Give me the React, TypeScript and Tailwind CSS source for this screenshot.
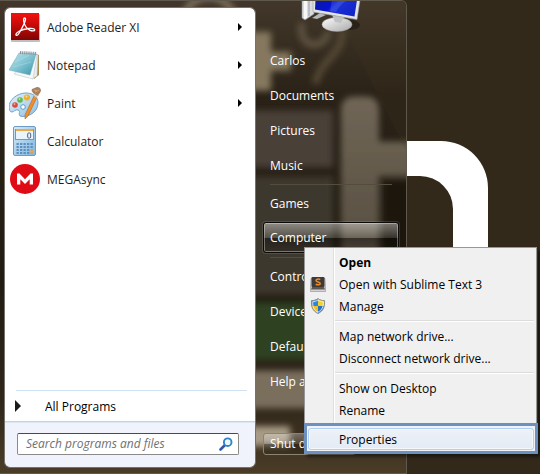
import React from "react";

const font = "font-['Open_Sans','Noto_Sans',sans-serif]";

function AdobeIcon() {
  return (
    <svg viewBox="0 0 32 32" className="size-8 shrink-0" aria-hidden="true">
      <defs>
        <linearGradient id="adobe" x1="0" y1="0" x2="0" y2="1">
          <stop offset="0" stopColor="#f3120f" />
          <stop offset="0.5" stopColor="#c00a08" />
          <stop offset="1" stopColor="#7d0503" />
        </linearGradient>
      </defs>
      <rect x="2" y="3" width="29" height="28" rx="1" fill="#000" opacity="0.25" />
      <rect x="2" y="2" width="28" height="27" fill="url(#adobe)" />
      <path
        d="M15.600 7c-1.300 0-1.200 2.200-.5 4.800.9 3.100 3 5.900 5.600 7.300 2.200 1.100 5 1.200 5.100-.2.100-1.500-3-1.600-5.900-1.400-3.600.3-7.400 1.300-9.800 2.700-2.500 1.400-3.700 3.100-3 4 .9 1 2.800-1.200 4.400-4.400 2-3.700 4.900-9.700 5-11.200.1-1.100-.3-1.600-.9-1.600z"
        fill="none"
        stroke="#fff"
        strokeWidth="1.300"
      />
    </svg>
  );
}

function NotepadIcon() {
  return (
    <svg viewBox="0 0 32 32" className="size-8 shrink-0" aria-hidden="true">
      <defs>
        <linearGradient id="pad" x1="0" y1="0" x2="1" y2="1">
          <stop offset="0" stopColor="#c4e6ec" />
          <stop offset="0.5" stopColor="#7fc3d2" />
          <stop offset="1" stopColor="#3a93a8" />
        </linearGradient>
      </defs>
      <path d="M27 5l3 1v20l-5 4z" fill="#a58c52" />
      <path d="M26 5l3 1-1 21-5 3z" fill="#e9edf0" stroke="#b7c2c7" strokeWidth="0.500" />
      <path d="M26 5l2 1-4 24-19-5z" fill="#f6f9fa" stroke="#aebdc2" strokeWidth="0.500" />
      <path d="M10 4l17 1-6 21-21-5z" fill="url(#pad)" stroke="#6aa8b4" strokeWidth="0.500" />
      <path d="M6 13l14-7M4 18l18-5" stroke="#c8eaf0" strokeWidth="0.500" opacity="0.700" />
      <path d="M11 3.500l17 1" stroke="#8b9498" strokeWidth="3" strokeDasharray="1.200 0.900" />
    </svg>
  );
}

function PaintIcon() {
  return (
    <svg viewBox="0 0 32 32" className="size-8 shrink-0" aria-hidden="true">
      <defs>
        <linearGradient id="palette" x1="0" y1="0" x2="1" y2="1">
          <stop offset="0" stopColor="#e4f2fb" />
          <stop offset="1" stopColor="#8dbfe2" />
        </linearGradient>
      </defs>
      <path
        d="M17 6C8 6 0 13 0 20c0 3 1 5 3 5s3-3 6-2 0 4 2 6c5 2 18-2 18-13C29 10 24 6 17 6z"
        fill="url(#palette)"
        stroke="#6f9fc8"
        strokeWidth="1"
      />
      <circle cx="6" cy="18" r="2.800" fill="#d94a3f" />
      <circle cx="11" cy="13" r="2.800" fill="#61b84b" />
      <circle cx="18" cy="10.500" r="3" fill="#f1ae27" />
      <circle cx="5.500" cy="17" r="1" fill="#f2a69d" />
      <circle cx="10.500" cy="12" r="1" fill="#b5e39a" />
      <circle cx="17.500" cy="9.500" r="1" fill="#ffe28c" />
      <circle cx="14" cy="20" r="2.300" fill="#fff" stroke="#5b9bcb" strokeWidth="1" />
      <path d="M25 9l3 1-9 19-3 3 0-4z" fill="#ef9030" stroke="#b8611a" strokeWidth="0.600" />
      <path d="M25 9l1-2 3 1-1 3z" fill="#cfd5d8" />
      <path d="M25 7c-2-2-3-4-2-5 2-1 3-1 5-2 3 0 4 2 4 4-1 2-2 3-3 5z" fill="#a9825e" />
      <path d="M25 3l3 1M26 5l4-2" stroke="#d0b08a" strokeWidth="0.800" />
    </svg>
  );
}

function CalculatorIcon() {
  const cols = [7.500, 11, 14.500, 18, 21.500];
  const rows = [18, 21, 24, 27];
  return (
    <svg viewBox="0 0 32 32" className="size-8 shrink-0" aria-hidden="true">
      <defs>
        <linearGradient id="calc" x1="0" y1="0" x2="1" y2="1">
          <stop offset="0" stopColor="#d5ebf9" />
          <stop offset="1" stopColor="#7fb6df" />
        </linearGradient>
      </defs>
      <rect x="4.500" y="1.500" width="22" height="29" rx="1.500" fill="url(#calc)" stroke="#6c9cc5" />
      <rect x="6.500" y="4.500" width="18" height="10" fill="#eaf4fb" stroke="#6e9abf" />
      <rect x="7" y="4" width="17" height="2" fill="#f0a844" />
      <rect x="18.700" y="8" width="3" height="5" rx="1" fill="none" stroke="#4d6280" strokeWidth="1" />
      {rows.map((y) =>
        cols.map((x) => (
          <rect
            key={`${x}-${y}`}
            x={x}
            y={y}
            width="2.300"
            height="2"
            fill={x > 20 && y > 23 ? "#f09a2c" : "#5f8fbd"}
          />
        )),
      )}
    </svg>
  );
}

function MegaIcon() {
  return (
    <svg viewBox="0 0 32 32" className="size-8 shrink-0" aria-hidden="true">
      <circle cx="16" cy="16" r="15" fill="#df0b15" />
      <path d="M8 21.500v-11h2.500l5.500 5.700 5.500-5.700H24v11h-3.300v-5.200L16 21l-4.700-4.700v5.200z" fill="#fff" />
    </svg>
  );
}

function SublimeIcon() {
  return (
    <svg viewBox="0 0 16 16" className="size-4" aria-hidden="true">
      <path d="M1 2.500h14l.7 13H.3z" fill="#d4d4d4" stroke="#8d8d8d" strokeWidth="0.600" />
      <rect x="1.500" y="1" width="13" height="10" rx="1" fill="#3d3a38" />
      <path d="M2 11h12l1 2.500H1z" fill="#5b5856" />
      <path
        d="M10.300 3.500C8 2.700 6 3.100 6 4.500c0 1.800 4.200 1.100 4.200 2.900 0 1.500-2.600 1.800-4.500.9"
        fill="none"
        stroke="#ef8b27"
        strokeWidth="1.500"
      />
    </svg>
  );
}

function ShieldIcon() {
  const shape = "M8 .6c2 1.500 4 2 6.500 2 .5 6-1 10.300-6.500 12.900C2.500 12.900 1 8.600 1.500 2.600 4 2.600 6 2.100 8 .6z";
  return (
    <svg viewBox="0 0 16 16" className="size-4" aria-hidden="true">
      <defs>
        <clipPath id="shield">
          <path d={shape} />
        </clipPath>
      </defs>
      <g clipPath="url(#shield)">
        <rect width="8" height="8" fill="#2f86d8" />
        <rect x="8" width="8" height="8" fill="#f8d02c" />
        <rect y="8" width="8" height="8" fill="#f5bf1f" />
        <rect x="8" y="8" width="8" height="8" fill="#2370c4" />
      </g>
      <path d={shape} fill="none" stroke="#7f8c96" strokeWidth="1" />
      <path d="M8 2c1.600 1.100 3.400 1.600 5.300 1.700.2 5-1.100 8.300-5.300 10.500C3.800 12 2.500 8.700 2.700 3.700 4.600 3.600 6.400 3.100 8 2z" fill="none" stroke="#e8eef2" strokeWidth="0.900" />
    </svg>
  );
}

function ComputerPicture() {
  return (
    <svg viewBox="0 0 64 36" className="h-9 w-16" aria-hidden="true">
      <defs>
        <linearGradient id="screen" x1="0" y1="0" x2="1" y2="0.400">
          <stop offset="0" stopColor="#0a1a9c" />
          <stop offset="0.450" stopColor="#0713d2" />
          <stop offset="0.550" stopColor="#1a30d8" />
          <stop offset="1" stopColor="#1327c8" />
        </linearGradient>
        <linearGradient id="base" x1="0" y1="0" x2="1" y2="1">
          <stop offset="0" stopColor="#fdfdfd" />
          <stop offset="0.500" stopColor="#d2d2d2" />
          <stop offset="1" stopColor="#a9a9a9" />
        </linearGradient>
      </defs>
      <ellipse cx="50" cy="25" rx="10" ry="5" fill="#0d0b08" opacity="0.400" />
      <path d="M2 0h12v14L5 20l-3-2z" fill="#d9dcdf" stroke="#8c9093" strokeWidth="0.600" />
      <path d="M4 0h3v18l-3 1z" fill="#f8f8f8" />
      <path d="M9 0v16" stroke="#9a9fa3" />
      <path d="M12 18l8-5 6 2-9 4z" fill="#b5b8ba" />
      <ellipse cx="37" cy="24.500" rx="15" ry="7" fill="url(#base)" stroke="#999" strokeWidth="0.500" />
      <path d="M32 15l12 2-3 6-6-1z" fill="#bfc1c3" />
      <path d="M13 0h47l-3 19.500L13 12z" fill="#e2e4e5" stroke="#9ea1a4" strokeWidth="0.600" />
      <path d="M15.500 0H57l-2.500 16.500L15 9.500z" fill="url(#screen)" />
      <path d="M32 0h16c-6 3-9 7-12 12l-6-1z" fill="#7795f5" opacity="0.250" />
    </svg>
  );
}

/* Blurred wallpaper as it shows through the glass of the menu. */
function GlassBackdrop() {
  return (
    <svg
      viewBox="0 0 406 474"
      preserveAspectRatio="none"
      className="absolute inset-0 size-full"
      aria-hidden="true"
    >
      <defs>
        <filter id="soft" x="-20%" y="-20%" width="140%" height="140%">
          <feGaussianBlur stdDeviation="3" />
        </filter>
        <linearGradient id="glass" x1="0" y1="0" x2="0" y2="1">
          <stop offset="0" stopColor="#42372a" />
          <stop offset="0.200" stopColor="#2a2217" />
          <stop offset="0.600" stopColor="#211c12" />
          <stop offset="0.850" stopColor="#30271a" />
          <stop offset="1" stopColor="#4a3c27" />
        </linearGradient>
        <linearGradient id="stem" x1="0" y1="0" x2="0" y2="1">
          <stop offset="0" stopColor="#706656" />
          <stop offset="1" stopColor="#50483b" />
        </linearGradient>
      </defs>
      <rect width="406" height="474" fill="url(#glass)" />
      <g filter="url(#soft)">
        <circle cx="209" cy="22" r="26" fill="none" stroke="#85775f" strokeWidth="6" />
        <path d="M240 31h31v20h20v19h-20v20h-31z" fill="#85785f" />
        <path d="M302 22c-3 16 6 24 16 21 7-2 10-8 10-13" fill="none" stroke="#5f533f" strokeWidth="7" />
        <path d="M342 28c2 26-20 28-27 55" fill="none" stroke="#554936" strokeWidth="7" />
        <rect x="240" y="110" width="93" height="57" fill="#484137" />
        <rect x="240" y="176" width="93" height="119" fill="#3e382e" />
        <rect x="240" y="303" width="180" height="57" fill="#2f4321" />
        <rect x="240" y="371" width="180" height="38" fill="#7a6e5d" />
        <rect x="240" y="427" width="50" height="20" fill="#a79b86" />
        <path d="M341 110q0-14 14-14h10q14 0 14 14v31h40v35h-40v120h-38z" fill="url(#stem)" />
        <path d="M383 180h40v120h-40z" fill="#1b160e" />
      </g>
      <path d="M330 0h76v150z" fill="#4b3b22" opacity="0.150" />
    </svg>
  );
}

function Wallpaper() {
  return (
    <svg className="absolute left-0 top-0 h-[474px] w-[540px]" viewBox="0 0 540 474" aria-hidden="true">
      <path d="M380 141h61a47 47 0 0 1 47 47v240h-35V209a33 33 0 0 0-33-33h-40z" fill="#fff" />
    </svg>
  );
}

const programs = [
  { name: "Adobe Reader XI", icon: <AdobeIcon />, more: true },
  { name: "Notepad", icon: <NotepadIcon />, more: true },
  { name: "Paint", icon: <PaintIcon />, more: true },
  { name: "Calculator", icon: <CalculatorIcon />, more: false },
  { name: "MEGAsync", icon: <MegaIcon />, more: false },
];

const placeGroups = [
  ["Carlos", "Documents", "Pictures", "Music"],
  ["Games", "Computer"],
  ["Control Panel", "Devices and Printers", "Default Programs", "Help and Support"],
];

function ProgramsPanel() {
  return (
    <div className="flex w-[250px] shrink-0 flex-col overflow-hidden rounded-[5px] bg-white outline outline-1 outline-[#76716a]">
      <ul>
        {programs.map((p) => (
          <li key={p.name}>
            <button type="button" className="flex h-[38px] w-full items-center pl-1 pr-[13px] text-left text-[#1e1e1e]">
              {p.icon}
              <span className="ml-[6px] flex-1 pt-[2px]">{p.name}</span>
              {p.more && (
                <svg viewBox="0 0 4 8" className="h-2 w-1" aria-hidden="true">
                  <path d="M0 0l4 4-4 4z" fill="#000" />
                </svg>
              )}
            </button>
          </li>
        ))}
      </ul>
      <div className="flex-1" />
      <div className="ml-[11px] mr-2 h-px bg-[#d0e3f5]" />
      <button type="button" className="flex h-[30px] items-center pl-[10px] text-left text-black">
        <svg viewBox="0 0 6 12" className="h-3 w-[6px]" aria-hidden="true">
          <path d="M0 0l6 6-6 6z" fill="#1a1a1a" />
        </svg>
        <span className="ml-6 pt-[2px]">All Programs</span>
      </button>
      <div className="border-t border-[#c3d3e5] bg-[#f0f3fb] pb-3 pl-3 pr-4 pt-[11px] shadow-[inset_0_1px_0_#dde7f3]">
        <label className="flex h-[22px] items-center rounded-[2px] border border-[#8a8a8a] border-t-[#4a4a4a] bg-white pl-2 pr-[5px]">
          <input
            type="text"
            aria-label="Search programs and files"
            placeholder="Search programs and files"
            className="min-w-0 flex-1 italic outline-none placeholder:text-[#707070]"
          />
          <svg viewBox="0 0 14 14" className="size-[14px]" aria-hidden="true">
            <path d="M1.500 12.500L6 8" stroke="#3358a8" strokeWidth="2.600" strokeLinecap="round" />
            <circle cx="8.700" cy="5.200" r="3.800" fill="#eef7fd" stroke="#2f83cc" strokeWidth="1.900" />
          </svg>
        </label>
      </div>
    </div>
  );
}

function Place({ name }: { name: string }) {
  const active = name === "Computer";
  return (
    <button
      type="button"
      className={
        active
          ? "mb-[3px] mt-px flex h-[31px] w-full items-center rounded-[3px] border border-[#0c0b09] bg-[linear-gradient(to_bottom,rgba(255,255,255,.42),rgba(255,255,255,.12)_50%,rgba(0,0,0,.4)_51%,rgba(0,0,0,.15))] pl-[6px] pt-px text-left shadow-[inset_0_0_0_1px_rgba(255,255,255,.35),0_0_0_1px_rgba(255,255,255,.12)]"
          : "flex h-[35px] w-full items-center pl-[7px] text-left"
      }
    >
      {name}
    </button>
  );
}

function PlacesPanel() {
  return (
    <nav className="flex min-w-0 flex-1 flex-col pl-2 pr-[7px] text-white" aria-label="Places">
      <div className="-mt-2 flex h-[43px] justify-center pl-[2px]">
        <ComputerPicture />
      </div>
      {placeGroups.map((group, i) => (
        <div key={group[0]}>
          {i > 0 && <div className="mx-[7px] my-px h-px bg-[#544c3f]" />}
          {group.map((name) => (
            <Place key={name} name={name} />
          ))}
        </div>
      ))}
      <div className="flex-1" />
      <button
        type="button"
        className="mb-3 h-[22px] w-[93px] rounded-[3px] border border-[#8b8373] bg-[linear-gradient(to_bottom,rgba(255,255,255,.3),rgba(255,255,255,.08)_50%,rgba(0,0,0,.25)_51%,rgba(0,0,0,.1))] pl-[6px] text-left"
      >
        Shut down
      </button>
    </nav>
  );
}

function MenuItem({ label, icon, bold }: { label: string; icon?: React.ReactNode; bold?: boolean }) {
  return (
    <button type="button" role="menuitem" className="flex h-[22px] w-full items-center text-left">
      <span className="flex w-[34px] shrink-0 pl-[5px]">{icon}</span>
      <span className={bold ? "pt-px font-bold" : "pt-px"}>{label}</span>
    </button>
  );
}

function Divider() {
  return <div className="my-[3px] ml-[30px] mr-[2px] h-[2px] border-t border-[#dcdcdc] bg-white" />;
}

function ContextMenu() {
  return (
    <div
      role="menu"
      className="absolute left-[304px] top-[247px] w-[234px] text-black shadow-[3px_3px_3px_rgba(0,0,0,.45)]"
    >
      <div className="mr-px border border-b-0 border-[#979797] bg-[#f0f0f0] bg-[linear-gradient(to_right,#dfdfdf_1px,#fff_1px,#fff_2px,transparent_2px)] bg-[position:28px_0] bg-no-repeat pb-[2px] pt-[3px]">
        <MenuItem label="Open" bold />
        <MenuItem label="Open with Sublime Text 3" icon={<SublimeIcon />} />
        <MenuItem label="Manage" icon={<ShieldIcon />} />
        <Divider />
        <MenuItem label="Map network drive..." />
        <MenuItem label="Disconnect network drive..." />
        <Divider />
        <MenuItem label="Show on Desktop" />
        <MenuItem label="Rename" />
      </div>
      <div className="border-[3px] border-[#6c90c0] bg-[#f2f2f2] px-px pb-px pt-[2px]">
        <button
          type="button"
          role="menuitem"
          className="flex h-[22px] w-full items-center rounded-[3px] border border-[#aecff7] bg-[linear-gradient(to_bottom,#edf1f7,#e4ebf5)] pl-[30px] text-left shadow-[inset_0_0_0_1px_#f4f7fb]"
        >
          <span className="pt-px">Properties</span>
        </button>
      </div>
    </div>
  );
}

export default function App() {
  return (
    <main className={`relative min-h-screen overflow-hidden bg-[#32291b] text-[12px] leading-4 ${font}`}>
      <Wallpaper />
      <section
        aria-label="Start menu"
        className="relative flex min-h-screen w-[407px] overflow-hidden rounded-tr-[6px] border-b border-r border-t border-[#5f584c]"
      >
        <GlassBackdrop />
        <div className="relative flex flex-1 pb-[6px] pl-[5px] pt-[7px]">
          <ProgramsPanel />
          <PlacesPanel />
        </div>
      </section>
      <ContextMenu />
    </main>
  );
}
